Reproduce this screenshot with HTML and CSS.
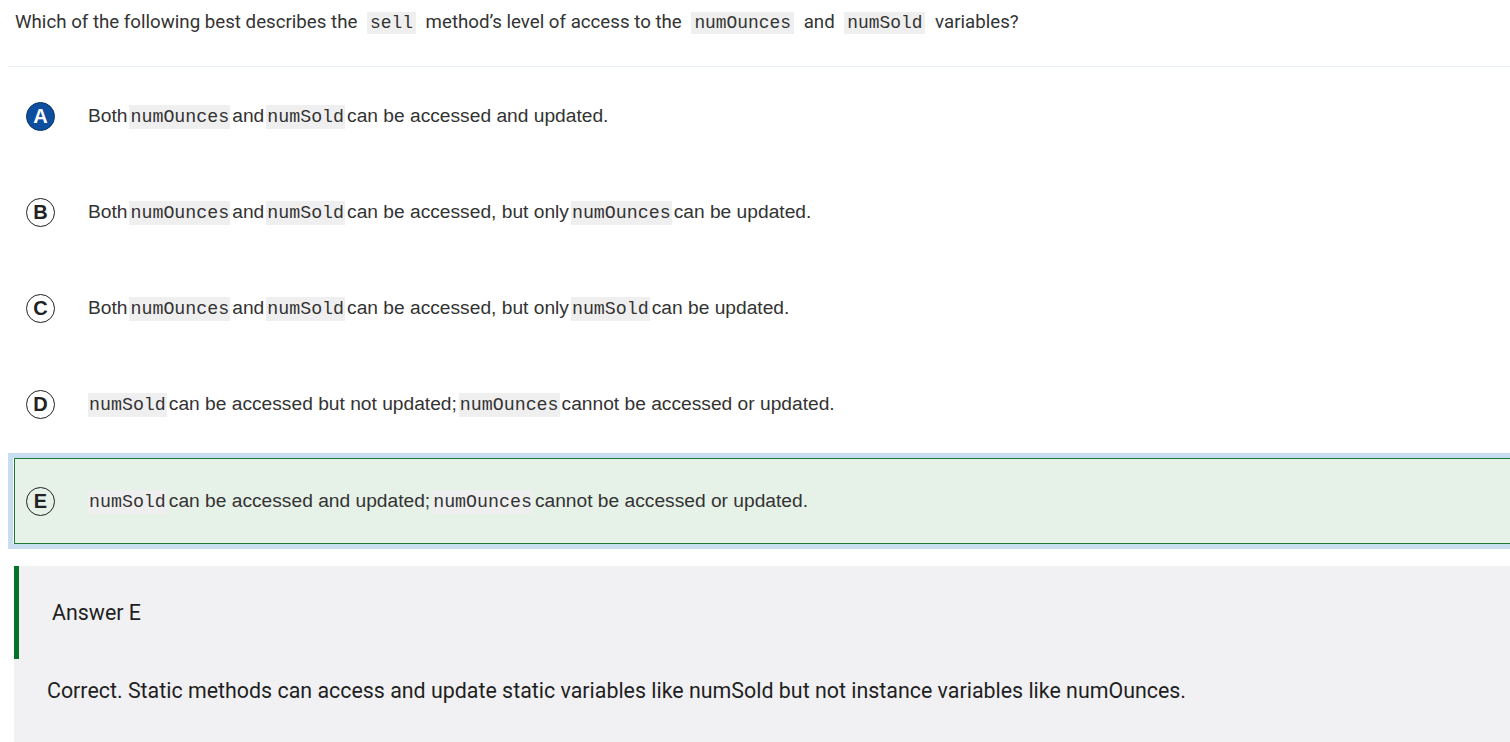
FILE: index.html
```html
<!DOCTYPE html>
<html>
<head>
<meta charset="utf-8">
<link rel="stylesheet" href="styles.css">
</head>
<body>
<div class="page">
  <div class="question">Which of the following best describes the <code class="qcode">sell</code> method’s level of access to the <code class="qcode">numOunces</code> and <code class="qcode">numSold</code> variables?</div>
  <div class="rule"></div>
  <div class="options">
    <div class="option">
      <span class="badge selected">A</span>
      <span class="otext">Both<code>numOunces</code>and<code>numSold</code>can be accessed and updated.</span>
    </div>
    <div class="option">
      <span class="badge">B</span>
      <span class="otext">Both<code>numOunces</code>and<code>numSold</code>can be accessed, but only<code>numOunces</code>can be updated.</span>
    </div>
    <div class="option">
      <span class="badge">C</span>
      <span class="otext">Both<code>numOunces</code>and<code>numSold</code>can be accessed, but only<code>numSold</code>can be updated.</span>
    </div>
    <div class="option">
      <span class="badge">D</span>
      <span class="otext"><code class="first">numSold</code>can be accessed but not updated;<code>numOunces</code>cannot be accessed or updated.</span>
    </div>
    <div class="option-correct">
      <div class="option inner">
        <span class="badge">E</span>
        <span class="otext"><code class="first">numSold</code>can be accessed and updated;<code>numOunces</code>cannot be accessed or updated.</span>
      </div>
    </div>
  </div>
  <div class="answer">
    <div class="answer-head">Answer E</div>
    <div class="answer-body">Correct. Static methods can access and update static variables like numSold but not instance variables like numOunces.</div>
  </div>
</div>
</body>
</html>
```

FILE: styles.css
```css
html, body {
  margin: 0;
  padding: 0;
  background: #ffffff;
}
.page {
  width: 1510px;
  height: 742px;
  overflow: hidden;
}
.question {
  font-family: Roboto, "Liberation Sans", sans-serif;
  font-size: 18.7px;
  color: #333333;
  padding: 11px 15px 0 15px;
  height: 55px;
  box-sizing: border-box;
  line-height: 22px;
}
.qcode {
  font-family: "Liberation Mono", monospace;
  font-size: 17.9px;
  background: #efefef;
  padding: 1px 3px;
  margin: 0 5px;
}
.rule {
  margin: 11px 0 0 8px;
  height: 1px;
  background: #e8f1fa;
}
.options {
  margin-top: 1px;
}
.option {
  height: 96px;
  display: flex;
  align-items: center;
  padding-left: 26px;
  box-sizing: border-box;
}
.badge {
  width: 27px;
  height: 27px;
  border: 1.3px solid #222;
  border-radius: 50%;
  display: flex;
  align-items: center;
  justify-content: center;
  font-family: "Liberation Sans", Arial, sans-serif;
  font-weight: bold;
  font-size: 20px;
  color: #222;
  flex: none;
  box-sizing: content-box;
}
.badge.selected {
  background: #0d4f9e;
  border-color: #0a3568;
  color: #ffffff;
}
.otext {
  margin-left: 33px;
  font-family: "Liberation Sans", Arial, sans-serif;
  font-size: 19.2px;
  color: #333333;
}
.otext code {
  font-family: "Liberation Mono", monospace;
  font-size: 18.3px;
  background: #efefef;
  padding: 2px 1px;
  margin: 0 2px;
}
.otext code.first {
  margin-left: 0;
}
.option-correct {
  margin: 1px 0 0 8px;
  border: 5px solid #c9ddf0;
  border-right: none;
  height: 96px;
  box-sizing: border-box;
}
.option.inner {
  margin-left: 1px;
  height: 86px;
  border: 1px solid #1b7a33;
  border-right: none;
  background: #e6f1e8;
  padding-left: 11px;
}
.answer {
  margin: 17px 0 0 14px;
  background: #f1f1f3;
  height: 180px;
}
.answer-head {
  border-left: 5px solid #057326;
  height: 93px;
  box-sizing: border-box;
  padding-left: 33px;
  display: flex;
  align-items: center;
  font-family: Roboto, "Liberation Sans", sans-serif;
  font-size: 21.4px;
  color: #1f1f1f;
}
.answer-body {
  padding: 19px 0 0 33px;
  font-family: Roboto, "Liberation Sans", sans-serif;
  font-size: 21.4px;
  color: #1f1f1f;
}
```
